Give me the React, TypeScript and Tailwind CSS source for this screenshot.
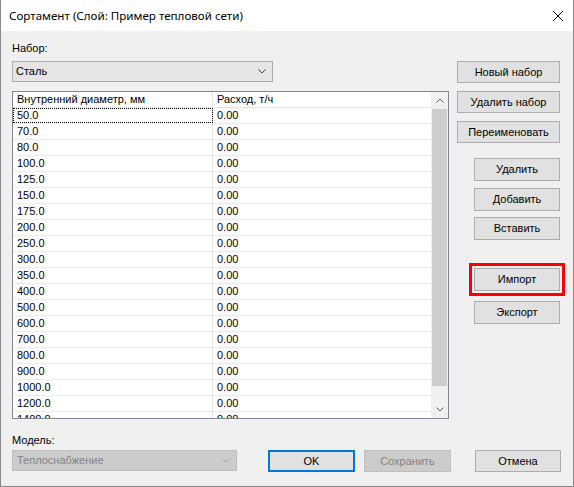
import type { ReactNode } from "react";

const diameters = [
  "50.0", "70.0", "80.0", "100.0", "125.0", "150.0", "175.0", "200.0", "250.0", "300.0",
  "350.0", "400.0", "500.0", "600.0", "700.0", "800.0", "900.0", "1000.0", "1200.0", "1400.0",
];

function Btn({ children, className = "" }: { children: ReactNode; className?: string }) {
  return (
    <button className={"flex shrink-0 items-center justify-center border border-[#adadad] bg-[#e1e1e1] text-[11px] text-black " + className}>
      {children}
    </button>
  );
}

function Chevron({ up = false, color = "#404040" }: { up?: boolean; color?: string }) {
  return (
    <svg width="8" height="5" viewBox="0 0 8 5" className="shrink-0">
      <path d={up ? "M0.5 4.5 L4 1 L7.5 4.5" : "M0.5 0.5 L4 4 L7.5 0.5"} fill="none" stroke={color} strokeWidth="1" />
    </svg>
  );
}

export default function App() {
  return (
    <div className="flex h-[487px] w-[574px] flex-col overflow-hidden bg-[#f0f0f0] font-['Liberation_Sans',Arial,sans-serif] text-[11px] text-black">
      {/* title bar */}
      <div className="flex h-[31px] shrink-0 items-center border-x border-[#8a8a8a] bg-white pl-[8px] pr-[10px]">
        <span className="font-['Noto_Sans',sans-serif] text-[11.6px] leading-none">Сортамент (Слой: Пример тепловой сети)</span>
        <svg width="10" height="10" viewBox="0 0 10 10" className="ml-auto">
          <path d="M0 0 L10 10 M10 0 L0 10" stroke="#000" strokeWidth="1" />
        </svg>
      </div>

      <div className="flex flex-1 flex-col border-x border-b border-[#8a8a8a] pl-[11px]">
        <div className="flex">
          {/* left column */}
          <div className="flex w-[437px] flex-col">
            <div className="mt-[10px] h-[15px] leading-[15px]">Набор:</div>
            <div className="mt-[5px] flex h-[21px] w-[261px] items-center justify-between border border-[#adadad] bg-[#e5e5e5] pl-[3px] pr-[6px]">
              <span>Сталь</span>
              <Chevron />
            </div>

            <div className="mt-[9px] flex h-[328px] border border-[#828790] bg-white">
              <div className="flex min-w-0 flex-1 flex-col overflow-hidden">
                <div className="flex h-[16px] shrink-0 border-b border-[#e5e5e5]">
                  <div className="flex w-[200px] items-center border-r border-[#e5e5e5] pl-[4px]">Внутренний диаметр, мм</div>
                  <div className="flex flex-1 items-center pl-[4px]">Расход, т/ч</div>
                </div>
                {diameters.map((d, i) => (
                  <div key={d} className="flex h-[16px] shrink-0 border-b border-[#ebebeb]">
                    <div
                      className={
                        i === 0
                          ? "flex w-[200px] items-center border-r border-[#e3e3e3] pl-[4px] outline-1 -outline-offset-1 outline-dotted outline-black"
                          : "flex w-[200px] items-center border-r border-[#e3e3e3] pl-[4px]"
                      }
                    >
                      {d}
                    </div>
                    <div className="flex flex-1 items-center pl-[4px]">0.00</div>
                  </div>
                ))}
              </div>
              {/* scrollbar */}
              <div className="flex w-[17px] shrink-0 flex-col bg-[#f0f0f0]">
                <div className="flex h-[17px] items-center justify-center">
                  <Chevron up color="#606060" />
                </div>
                <div className="flex-1">
                  <div className="mx-[1px] h-[277px] bg-[#cdcdcd]" />
                </div>
                <div className="flex h-[17px] items-center justify-center">
                  <Chevron color="#606060" />
                </div>
              </div>
            </div>
          </div>

          {/* right column */}
          <div className="ml-[8px] flex w-[103px] flex-col items-end pt-[30px]">
            <Btn className="h-[22px] w-[103px]">Новый набор</Btn>
            <Btn className="mt-[8px] h-[22px] w-[103px]">Удалить набор</Btn>
            <Btn className="mt-[8px] h-[22px] w-[103px]">Переименовать</Btn>
            <Btn className="mt-[15px] h-[23px] w-[86px]">Удалить</Btn>
            <Btn className="mt-[7px] h-[23px] w-[86px]">Добавить</Btn>
            <Btn className="mt-[6px] h-[23px] w-[86px]">Вставить</Btn>
            <div className="relative mt-[28px]">
              <Btn className="h-[23px] w-[86px]">Импорт</Btn>
              <div className="pointer-events-none absolute -inset-[5px] border-[3px] border-[#ff0000]" />
            </div>
            <Btn className="mt-[10px] h-[23px] w-[86px]">Экспорт</Btn>
          </div>
        </div>

        <div className="mt-[14px] h-[15px] leading-[15px]">Модель:</div>
        <div className="mt-[2px] flex items-start">
          <div className="flex h-[21px] w-[225px] items-center justify-between border border-[#bfbfbf] bg-[#cccccc] pl-[4px] pr-[6px] text-[#838383]">
            <span>Теплоснабжение</span>
            <Chevron color="#a8a8a8" />
          </div>
          <button className="ml-[31px] flex h-[22px] w-[87px] items-center justify-center border-2 border-[#0078d7] bg-[#e1e1e1] text-[11px]">OK</button>
          <button className="ml-[9px] flex h-[22px] w-[87px] items-center justify-center border border-[#bfbfbf] bg-[#cccccc] text-[11px] text-[#838383]">Сохранить</button>
          <Btn className="ml-[24px] h-[22px] w-[86px]">Отмена</Btn>
        </div>
      </div>
    </div>
  );
}
